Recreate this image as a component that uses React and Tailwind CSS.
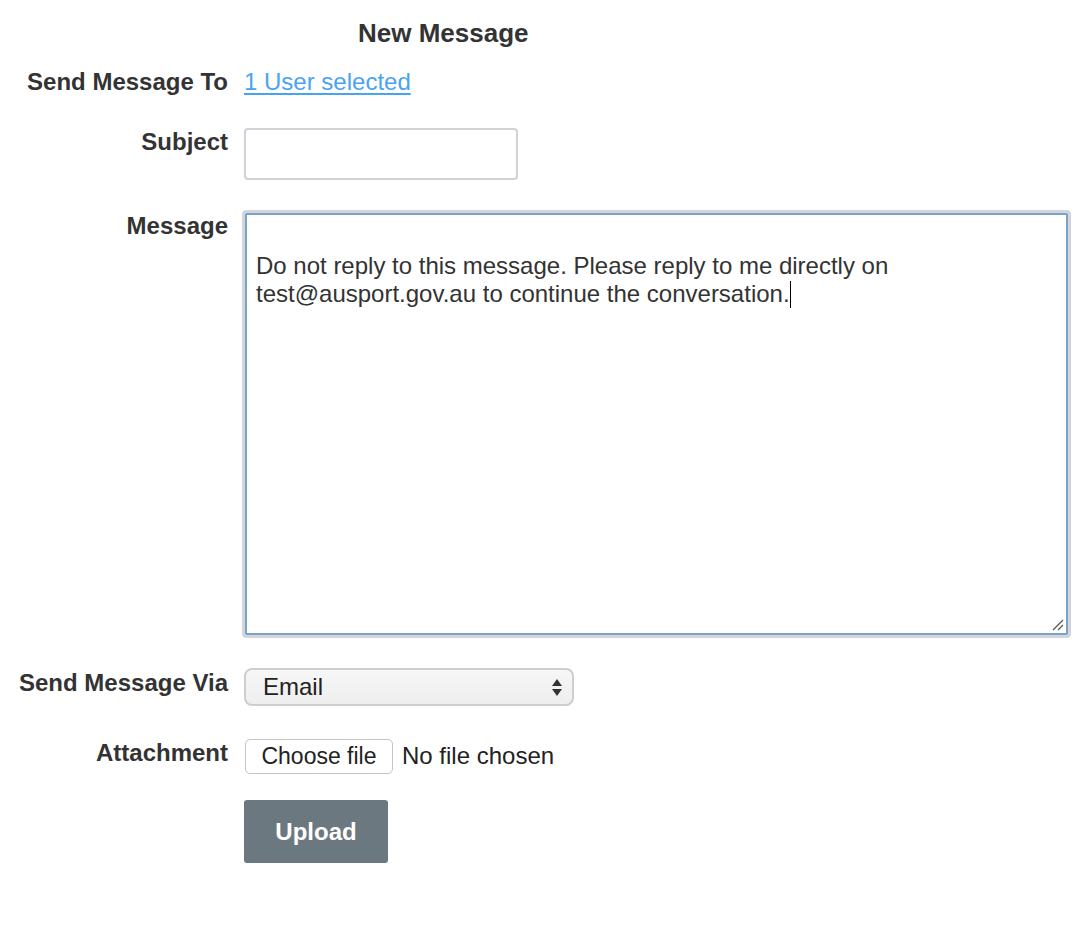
export default function App() {
  return (
    <div className="min-h-screen bg-white text-[#333] font-['Liberation_Sans',Arial,sans-serif]">
      <div className="pt-[19px]">
        {/* Title */}
        <h2 className="ml-[358px] text-[26px] font-bold leading-[28px]">New Message</h2>

        {/* Send to */}
        <div className="flex items-start mt-[21px]">
          <div className="w-[228px] text-right text-[24px] font-bold leading-[28px]">Send Message To</div>
          <a href="#" className="ml-[16px] text-[24px] leading-[28px] text-[#4aa3f1] underline underline-offset-[3px]">
            1 User selected
          </a>
        </div>

        {/* Subject */}
        <div className="flex items-start mt-[32px]">
          <div className="w-[228px] text-right text-[24px] font-bold leading-[28px]">Subject</div>
          <div className="ml-[16px] w-[274px] h-[52px] border-2 border-[#cfd2d6] rounded-[4px] bg-white" />
        </div>

        {/* Message */}
        <div className="flex items-start mt-[30px]">
          <div className="w-[228px] text-right text-[24px] font-bold leading-[28px] mt-[2px]">Message</div>
          <div className="ml-[14px] w-[829px] h-[428px] rounded-[4px] border-[3px] border-[#d3d5d8] bg-[#d3d5d8]">
            <div className="relative w-full h-full border-[2px] border-[#76a4ca] bg-white rounded-[2px] px-[9px] pt-[37px] text-[24px] leading-[28px]">
              <p>Do not reply to this message. Please reply to me directly on</p>
              <p>
                test@ausport.gov.au to continue the conversation.
                <span className="inline-block w-[1.5px] h-[27px] bg-black align-[-6px]" />
              </p>
              <svg className="absolute right-[2px] bottom-[2px]" width="14" height="14" viewBox="0 0 14 14">
                <path d="M13 3 L3 13 M13 8 L8 13" stroke="#555" strokeWidth="1.3" />
              </svg>
            </div>
          </div>
        </div>

        {/* Via */}
        <div className="flex items-start mt-[31px]">
          <div className="w-[228px] text-right text-[24px] font-bold leading-[28px]">Send Message Via</div>
          <div className="ml-[16px] -mt-[1px] w-[330px] h-[38px] border-2 border-[#ccced1] rounded-[8px] bg-gradient-to-b from-[#f7f7f7] to-[#eeeeee] flex items-center justify-between pl-[17px] pr-[9px]">
            <span className="text-[24px] text-[#222]">Email</span>
            <svg width="12" height="22" viewBox="0 0 12 22">
              <path d="M6 3 L11 10 L1 10 Z" fill="#333" />
              <path d="M1 13 L11 13 L6 20 Z" fill="#333" />
            </svg>
          </div>
        </div>

        {/* Attachment */}
        <div className="flex items-start mt-[33px]">
          <div className="w-[228px] text-right text-[24px] font-bold leading-[28px]">Attachment</div>
          <div className="ml-[17px] flex items-center -mt-[1px]">
            <div className="h-[35px] w-[148px] border border-[#c4c4c4] rounded-[5px] bg-white flex items-center justify-center text-[23px] text-[#222]">
              Choose file
            </div>
            <span className="ml-[9px] text-[24px] text-[#222]">No file chosen</span>
          </div>
        </div>

        {/* Upload */}
        <div className="ml-[244px] mt-[26px]">
          <button className="w-[144px] h-[63px] rounded-[3px] bg-[#6c787f] text-white text-[24px] font-bold">
            Upload
          </button>
        </div>
      </div>
    </div>
  );
}
